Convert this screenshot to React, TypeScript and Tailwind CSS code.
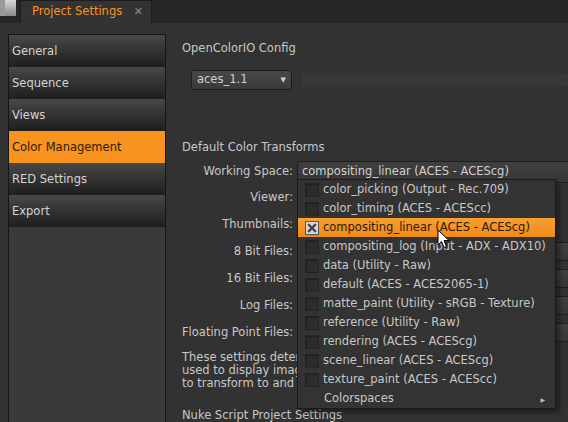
import React from 'react';

const font = { fontFamily: '"DejaVu Sans", Verdana, sans-serif' };

const navItems = ['General', 'Sequence', 'Views', 'Color Management', 'RED Settings', 'Export'];

const rows = [
  { label: 'Working Space:', value: 'compositing_linear (ACES - ACEScg)', short: false },
  { label: 'Viewer:', value: '', short: true },
  { label: 'Thumbnails:', value: '', short: true },
  { label: '8 Bit Files:', value: '', short: false },
  { label: '16 Bit Files:', value: '', short: false },
  { label: 'Log Files:', value: '', short: false },
  { label: 'Floating Point Files:', value: '', short: false },
];

const menuItems = [
  'color_picking (Output - Rec.709)',
  'color_timing (ACES - ACEScc)',
  'compositing_linear (ACES - ACEScg)',
  'compositing_log (Input - ADX - ADX10)',
  'data (Utility - Raw)',
  'default (ACES - ACES2065-1)',
  'matte_paint (Utility - sRGB - Texture)',
  'reference (Utility - Raw)',
  'rendering (ACES - ACEScg)',
  'scene_linear (ACES - ACEScg)',
  'texture_paint (ACES - ACEScc)',
];

export default function App() {
  return (
    <div className="w-[568px] h-[422px] overflow-hidden bg-[#323232] text-[11.5px] text-[#c8c8c8] relative" style={font}>
      {/* Tab bar */}
      <div className="h-[23px] bg-[#262626] flex items-end">
        <div className="w-[17px] h-[23px] flex flex-col justify-start">
          <div className="flex h-[16px]">
            <div className="w-[5px] h-[16px] bg-[#9a9a9a]" />
            <div className="w-[11px] h-[16px] bg-gradient-to-b from-[#d8d8d8] to-[#8a8a8a]" />
          </div>
        </div>
        <div className="ml-[3px] w-[132px] h-[23px] bg-[#333333] border-l border-r border-t border-[#1c1c1c] flex items-center pl-[11px] pr-[8px]">
          <span className="text-[#f7931e]">Project Settings</span>
          <span className="ml-auto text-[#8a8a8a] text-[11px] font-bold">✕</span>
        </div>
      </div>

      <div className="flex">
        {/* Sidebar */}
        <div className="ml-[8px] mt-[11px] w-[158px] h-[389px] bg-[#3a3a3a] border-l border-r border-t border-[#161616] flex flex-col">
          {navItems.map((item) => (
            <div
              key={item}
              className={`h-[32px] flex items-center pl-[3px] pt-[1px] ${
                item === 'Color Management'
                  ? 'bg-[#f7931e] text-[#2a1a08]'
                  : 'bg-gradient-to-b from-[#494949] to-[#1e1e1e] text-[#d4d4d4]'
              }`}
            >
              {item}
            </div>
          ))}
        </div>

        {/* Main panel */}
        <div className="ml-[16px] flex-1 flex flex-col">
          <div className="mt-[19px] h-[14px] flex items-center">OpenColorIO Config</div>
          <div className="mt-[14px] flex items-center">
            <div className="ml-[9px] w-[101px] h-[20px] rounded-[3px] border border-[#1c1c1c] bg-gradient-to-b from-[#484848] to-[#3a3a3a] flex items-center pl-[5px] pr-[5px] text-[#d0d0d0]">
              aces_1.1
              <span className="ml-auto text-[7px] text-[#cfcfcf]">▼</span>
            </div>
            <div className="ml-[9px] flex-1 h-[14px] rounded-[2px] bg-[#383838]" />
          </div>

          <div className="mt-[51px] h-[14px] flex items-center">Default Color Transforms</div>

          <div className="mt-[4px] flex flex-col">
            {rows.map((r, i) => (
              <div key={r.label} className={`flex items-center ${i === 0 ? 'h-[25px]' : 'h-[27px]'}`}>
                <div className={`w-[111px] shrink-0 whitespace-nowrap ${r.label === 'Floating Point Files:' ? 'text-left' : 'text-right'}`}>{r.label}</div>
                <div
                  className={`ml-[4px] ${r.short ? 'w-[240px]' : 'flex-1'} ${i === 0 ? 'h-[22px]' : 'h-[19px]'} rounded-l-[3px] border border-r-0 border-[#1e1e1e] bg-gradient-to-b from-[#404040] to-[#363636] flex items-center pl-[4px] text-[#d0d0d0] whitespace-nowrap`}
                >
                  {r.value}
                </div>
              </div>
            ))}
          </div>

          <div className="mt-[5px] leading-[13px] whitespace-nowrap">
            <div>These settings determine the default colorspaces</div>
            <div>used to display images in the Viewer and Thumbnails, and</div>
            <div>to transform to and from the working space.</div>
          </div>

          <div className="mt-[19px] h-[14px] flex items-center whitespace-nowrap">Nuke Script Project Settings</div>
        </div>
      </div>

      {/* Dropdown menu */}
      <div className="absolute left-[297px] top-[179px] w-[259px] bg-[#333333] border border-[#1a1a1a] shadow-[4px_4px_4px_rgba(0,0,0,0.35)] flex flex-col">
        {menuItems.map((m) => {
          const active = m.startsWith('compositing_linear');
          return (
            <div
              key={m}
              className={`h-[19px] flex items-center pl-[7px] pt-[1px] whitespace-nowrap ${
                active ? 'bg-gradient-to-b from-[#f9a030] to-[#ee8a16] text-[#2a1a08]' : 'text-[#c8c8c8]'
              }`}
            >
              {active ? (
                <div className="w-[14px] h-[14px] bg-[#d8d8d8] border border-[#555] flex items-center justify-center">
                  <svg width="10" height="10" viewBox="0 0 10 10">
                    <path d="M2 2 L8 8 M8 2 L2 8" stroke="#444" strokeWidth="2.4" strokeLinecap="square" />
                  </svg>
                </div>
              ) : (
                <div className="w-[14px] h-[14px] bg-[#2c2c2c] border border-[#242424] shadow-[inset_1px_1px_0_#202020]" />
              )}
              <span className="ml-[4px]">{m}</span>
            </div>
          );
        })}
        <div className="h-[19px] flex items-center pl-[26px] pr-[10px] pt-[1px] text-[#c8c8c8]">
          Colorspaces
          <span className="ml-auto text-[6px] text-[#bbbbbb]">▶</span>
        </div>
      </div>

      {/* Mouse cursor */}
      <svg className="absolute left-[437px] top-[229px]" width="14" height="20" viewBox="0 0 14 20">
        <path d="M1 1 L1 16 L4.5 12.5 L7 18.5 L9.5 17.5 L7 11.5 L12 11.5 Z" fill="#ffffff" stroke="#000000" strokeWidth="1" strokeLinejoin="miter" />
      </svg>
    </div>
  );
}
